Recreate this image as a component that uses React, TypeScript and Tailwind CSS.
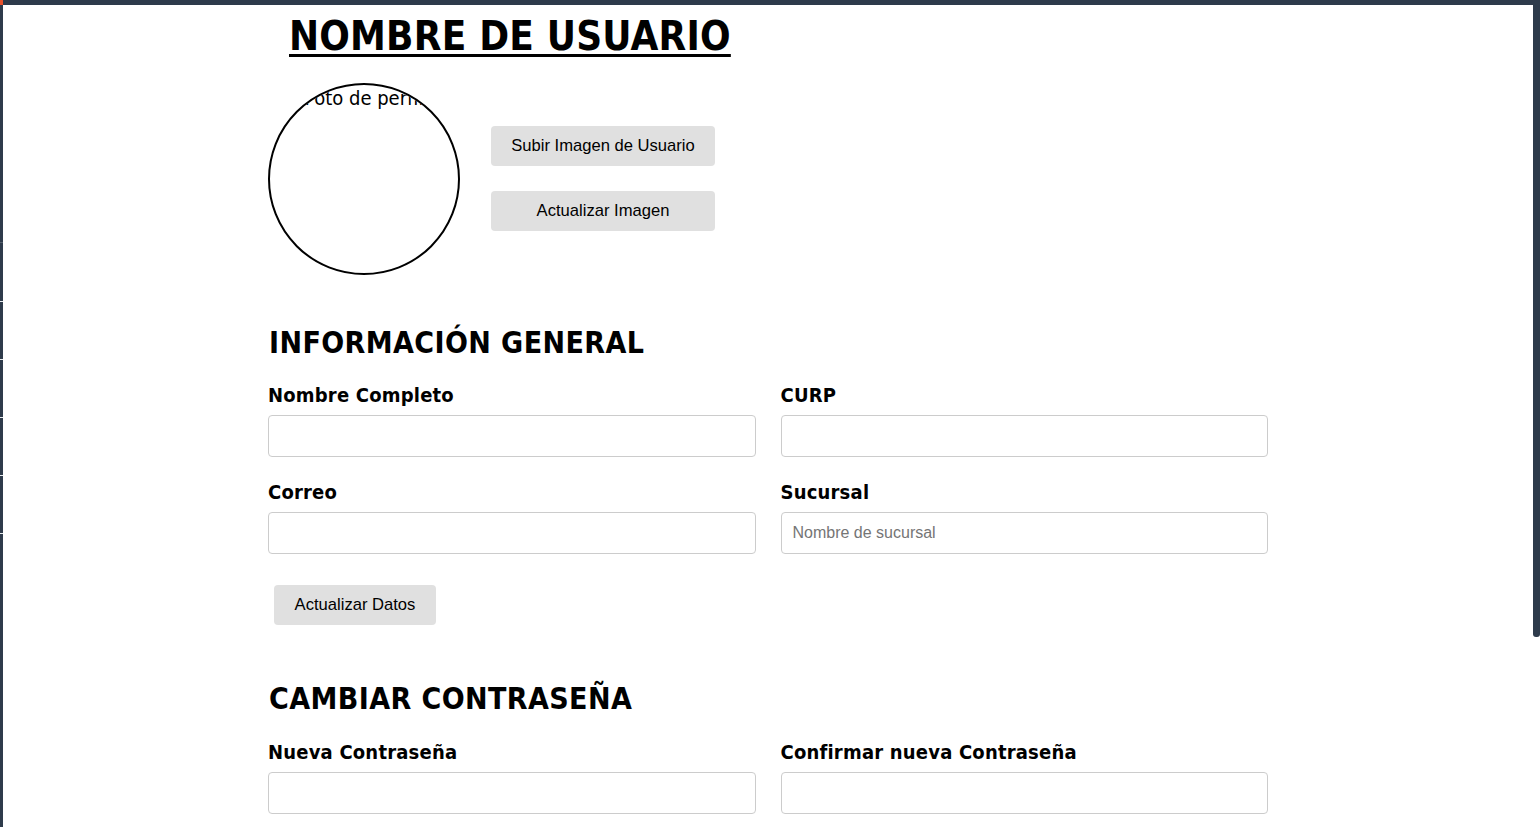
import React from "react";

const font = { fontFamily: '"DejaVu Sans Condensed", "DejaVu Sans", Verdana, sans-serif', fontStretch: "condensed" as const };

function Field({ label, placeholder }: { label: string; placeholder?: string }) {
  return (
    <div className="flex flex-col">
      <label className="text-[20px] font-bold text-black leading-[24px] mb-[8px] tracking-[0.2px]" style={font}>
        {label}
      </label>
      <input
        className="h-[42px] w-full rounded-[4px] border border-[#cccccc] bg-white px-[11px] text-[16px] text-black placeholder:text-[#757575] outline-none"
        style={{ fontFamily: '"Liberation Sans", Arial, sans-serif' }}
        placeholder={placeholder}
      />
    </div>
  );
}

function GrayButton({ children, className = "" }: { children: React.ReactNode; className?: string }) {
  return (
    <button
      className={`h-[40px] rounded-[4px] bg-[#e0e0e0] text-[16.6px] text-black ${className}`}
      style={{ fontFamily: '"Liberation Sans", Arial, sans-serif' }}
    >
      {children}
    </button>
  );
}

export default function App() {
  return (
    <div className="h-[827px] w-[1540px] overflow-hidden bg-white flex flex-col">
      <div className="h-[5px] bg-[#2e3b4b] flex shrink-0">
        <div className="w-[3px] bg-[#e8502a]" />
      </div>
      <div className="flex flex-1 min-h-0">
        <div className="w-[3px] bg-[#2e3b4b] flex flex-col shrink-0">
          <div className="h-[237px]" />
          <div className="h-px bg-[#55606c]" />
          <div className="h-[58px]" />
          <div className="h-px bg-[#e8ecef]" />
          <div className="h-[57px]" />
          <div className="h-px bg-[#e8ecef]" />
          <div className="h-[57px]" />
          <div className="h-px bg-[#e8ecef]" />
          <div className="h-[57px]" />
          <div className="h-px bg-[#e8ecef]" />
          <div className="h-[57px]" />
          <div className="h-px bg-[#e8ecef]" />
        </div>
        <main className="flex-1 flex justify-center">
          <div className="w-[1000px] flex flex-col">
            <h1
              className="pl-[21px] pt-[5px] text-[40px] font-bold leading-[52px] tracking-[0.2px] underline decoration-[3px] underline-offset-[4px] text-black"
              style={font}
            >
              <span>NOMBRE DE USUARIO</span>
            </h1>
            <div className="flex items-start mt-[21px]">
              <div className="w-[192px] h-[192px] rounded-full border-2 border-black overflow-hidden flex justify-center shrink-0">
                <span className="text-[20px] leading-[24px] whitespace-nowrap mt-[1px] text-black" style={font}>
                  Foto de perfil
                </span>
              </div>
              <div className="flex flex-col ml-[31px] mt-[43px] gap-[25px]">
                <GrayButton className="w-[224px]">Subir Imagen de Usuario</GrayButton>
                <GrayButton className="w-[224px]">Actualizar Imagen</GrayButton>
              </div>
            </div>
            <h2 className="mt-[48px] text-[30px] font-bold leading-[40px] tracking-[0.4px] text-black pl-[1px]" style={font}>
              INFORMACIÓN GENERAL
            </h2>
            <div className="grid grid-cols-2 gap-x-[25px] gap-y-[23px] mt-[20px]">
              <Field label="Nombre Completo" />
              <Field label="CURP" />
              <Field label="Correo" />
              <Field label="Sucursal" placeholder="Nombre de sucursal" />
            </div>
            <div className="mt-[31px] pl-[6px]">
              <GrayButton className="w-[162px]">Actualizar Datos</GrayButton>
            </div>
            <h2 className="mt-[54px] text-[30px] font-bold leading-[40px] tracking-[0.4px] text-black pl-[1px]" style={font}>
              CAMBIAR CONTRASEÑA
            </h2>
            <div className="grid grid-cols-2 gap-x-[25px] mt-[21px]">
              <Field label="Nueva Contraseña" />
              <Field label="Confirmar nueva Contraseña" />
            </div>
          </div>
        </main>
        <div className="w-[7px] shrink-0 flex flex-col">
          <div className="h-[632px] bg-[#2e3b4b] rounded-b-[3px]" />
        </div>
      </div>
    </div>
  );
}
